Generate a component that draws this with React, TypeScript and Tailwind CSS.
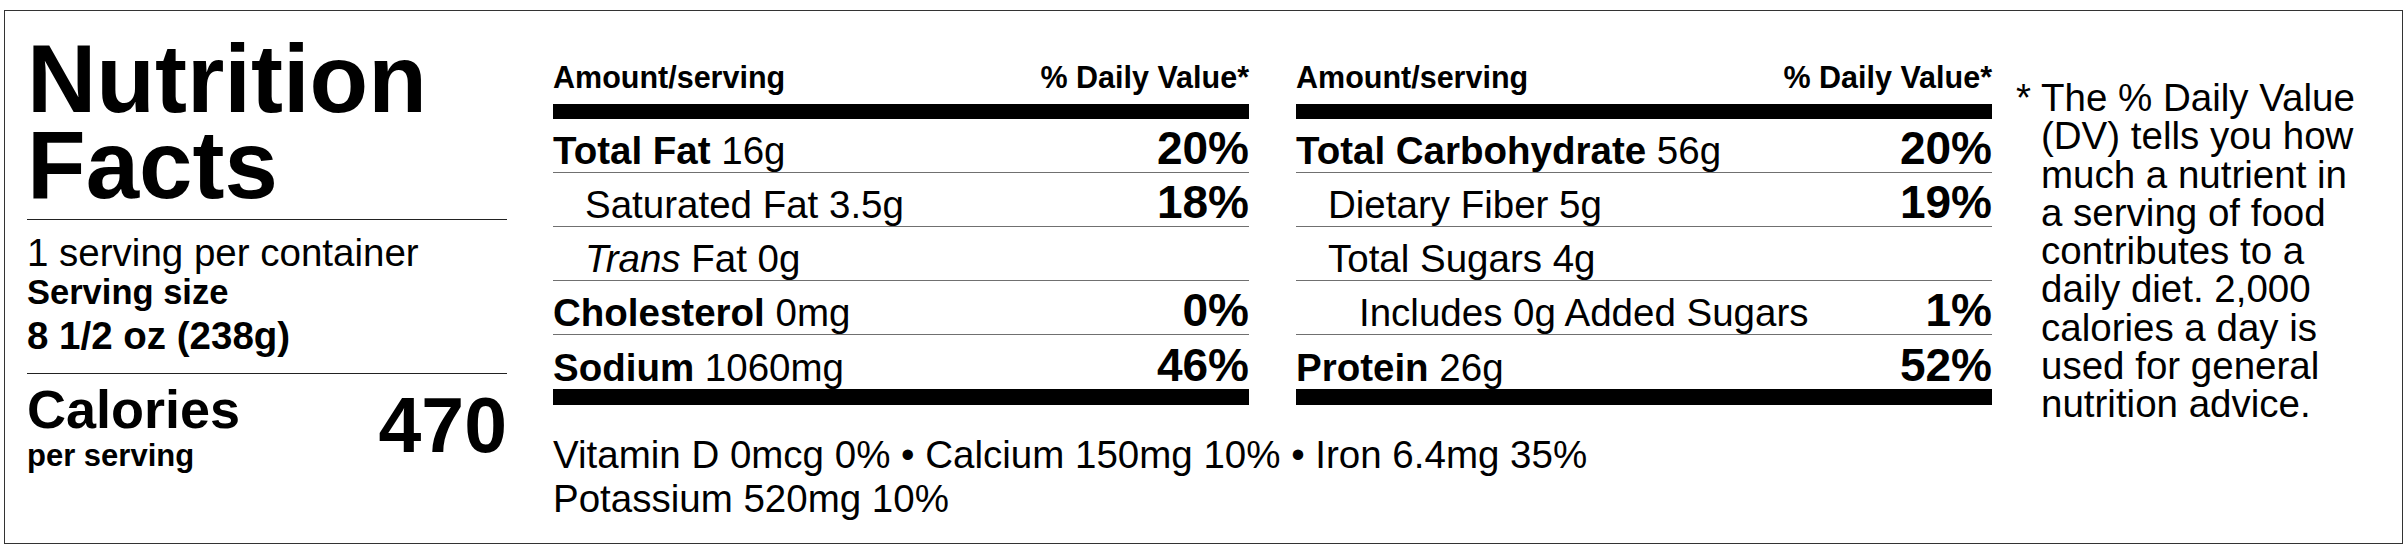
import type { ReactNode } from "react";

type Row = {
  label: ReactNode;
  dv?: string;
  indent?: 0 | 1 | 2;
  last?: boolean;
};

const fatRows: Row[] = [
  { label: <><b>Total Fat</b> 16g</>, dv: "20%" },
  { label: <>Saturated Fat 3.5g</>, dv: "18%", indent: 1 },
  { label: <><i>Trans</i> Fat 0g</>, indent: 1 },
  { label: <><b>Cholesterol</b> 0mg</>, dv: "0%" },
  { label: <><b>Sodium</b> 1060mg</>, dv: "46%", last: true },
];

const carbRows: Row[] = [
  { label: <><b>Total Carbohydrate</b> 56g</>, dv: "20%" },
  { label: <>Dietary Fiber 5g</>, dv: "19%", indent: 1 },
  { label: <>Total Sugars 4g</>, indent: 1 },
  { label: <>Includes 0g Added Sugars</>, dv: "1%", indent: 2 },
  { label: <><b>Protein</b> 26g</>, dv: "52%", last: true },
];

const indents = ["pl-0", "pl-[32px]", "pl-[63px]"];

const NutrientTable = ({ rows }: { rows: Row[] }) => (
  <div className="w-[696px]">
    {/* Column header */}
    <div className="flex h-[44px] justify-between text-[30.5px] font-bold leading-[34px]">
      <span>Amount/serving</span>
      <span>% Daily Value*</span>
    </div>
    <div className="h-[15px] bg-black" />

    {rows.map((row, i) => (
      <div
        key={i}
        className={`flex h-[54px] items-end justify-between text-[38.5px] leading-[42px] ${
          row.last ? "" : "border-b border-[#707070]"
        }`}
      >
        <span className={indents[row.indent ?? 0]}>{row.label}</span>
        {row.dv && <span className="text-[46px] font-bold leading-[47px]">{row.dv}</span>}
      </div>
    ))}
    <div className="h-[16px] bg-black" />
  </div>
);

export default function App() {
  return (
    <div
      className="h-[552px] w-[2408px] overflow-hidden bg-white pl-[4px] pt-[10px] text-black"
      style={{ fontFamily: '"Liberation Sans", Arial, sans-serif' }}
    >
      <div className="flex h-[534px] w-[2399px] border border-[#333] pl-[22px]">
        {/* Title / serving / calories */}
        <div className="w-[480px] pt-[25px]">
          <h1 className="text-[96px] font-bold leading-[86px]">
            Nutrition
            <br />
            Facts
          </h1>
          <div className="mt-[11px] border-t border-[#222]" />
          <div className="mt-[14px] text-[38.5px] leading-[38px]">1 serving per container</div>
          <div className="text-[34.5px] font-bold leading-[40px]">Serving size</div>
          <div className="mt-[2px] text-[38.5px] font-bold leading-[44px]">8 1/2 oz (238g)</div>
          <div className="mt-[15px] border-t border-[#222]" />
          <div className="flex justify-between">
            <div>
              <div className="mt-[8px] text-[54px] font-bold leading-[54px]">Calories</div>
              <div className="mt-[3px] text-[31px] font-bold leading-[34px]">per serving</div>
            </div>
            <div className="mt-[13px] text-[77px] font-bold leading-[77px]">470</div>
          </div>
        </div>

        {/* Nutrient tables */}
        <div className="ml-[46px] w-[1439px] pt-[49px]">
          <div className="flex gap-[47px]">
            <NutrientTable rows={fatRows} />
            <NutrientTable rows={carbRows} />
          </div>
          <p className="mt-[28px] text-[38.5px] leading-[44px]">
            Vitamin D 0mcg 0% • Calcium 150mg 10% • Iron 6.4mg 35%
            <br />
            Potassium 520mg 10%
          </p>
        </div>

        {/* Footnote */}
        <div className="ml-[24px] flex pt-[68px] text-[38.5px] leading-[38.3px]">
          <span className="w-[25px] shrink-0">*</span>
          <p className="w-[322px]">
            The % Daily Value (DV) tells you how much a nutrient in a serving of food contributes to a
            daily diet. 2,000 calories a day is used for general nutrition advice.
          </p>
        </div>
      </div>
    </div>
  );
}
